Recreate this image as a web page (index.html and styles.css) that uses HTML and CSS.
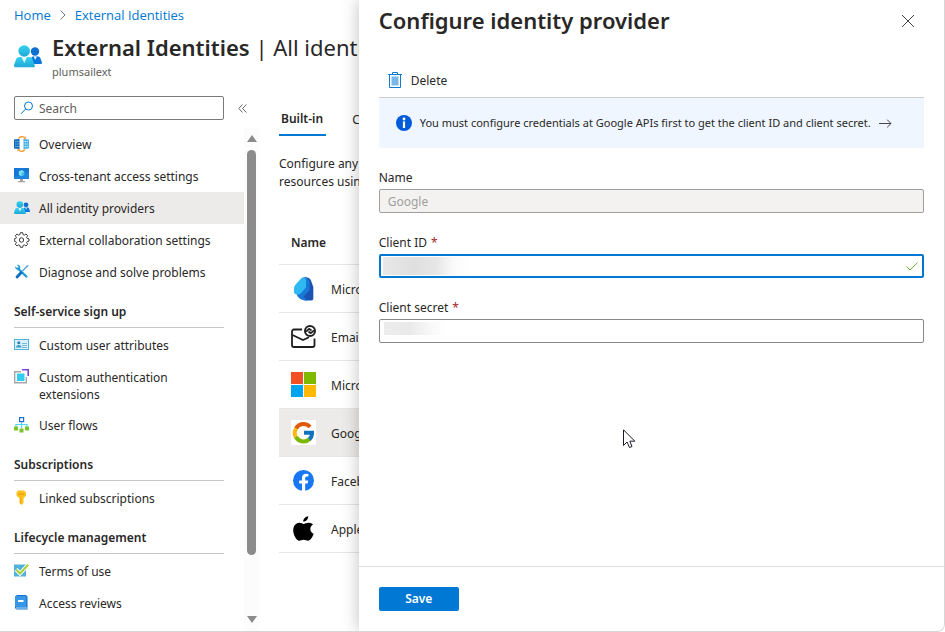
FILE: index.html
```html
<!DOCTYPE html>
<html lang="en">

<head>
    <meta charset="UTF-8">
    <meta name="viewport" content="width=device-width, initial-scale=1.0">
    <title>External Identities - All identity providers</title>
    <link rel="stylesheet" href="styles.css">
</head>

<body>
    <div class="window">
        <nav class="breadcrumb" aria-label="Breadcrumb">
            <a href="#">Home</a>
            <svg width="8" height="12" viewBox="0 0 8 12" fill="none">
                <path d="M1.5 1.5L6 6L1.5 10.5" stroke="#777" stroke-width="1" />
            </svg>
            <a href="#">External Identities</a>
        </nav>

        <header class="page-header">
            <svg class="header-icon" width="28" height="28" viewBox="0 0 28 28">
                <use href="#people" />
            </svg>
            <div>
                <h1 class="page-title">External Identities <span>| All identity providers</span></h1>
                <p class="page-subtitle">plumsailext</p>
            </div>
        </header>

        <div class="columns">
            <aside class="sidebar">
                <div class="search-row">
                    <label class="search-box">
                        <svg width="14" height="14" viewBox="0 0 14 14" fill="none" stroke="#0078d4">
                            <circle cx="8.5" cy="5" r="4" />
                            <path d="M5.7 8L1 12.8" />
                        </svg>
                        <input type="search" placeholder="Search" aria-label="Search">
                    </label>
                    <button class="collapse" aria-label="Collapse menu">
                        <svg width="9" height="9" viewBox="0 0 9 9" fill="none" stroke="#666">
                            <path d="M4.5 0.5L0.8 4.5L4.5 8.5M8.3 0.5L4.6 4.5L8.3 8.5" />
                        </svg>
                    </button>
                </div>

                <div class="menu-area">
                    <div class="menu">
                        <a href="#" class="menu-item">
                            <svg width="16" height="16" viewBox="0 0 16 16">
                                <path d="M0 3.5L5.5 3V13L0 12.5Z" fill="#0f6cbd" />
                                <path d="M9.5 3L15 3.5V12.5L9.5 13Z" fill="#50b4e8" />
                                <path d="M1.3 5.5H2.4M3.3 5.5H4.4M1.3 8H2.4M3.3 8H4.4M1.3 10.5H2.4M3.3 10.5H4.4" stroke="#9bdcfa" stroke-width="1.2" />
                                <path d="M10.7 5.5H11.8M12.7 5.5H13.8M10.7 8H11.8M12.7 8H13.8M10.7 10.5H11.8M12.7 10.5H13.8" stroke="#e3f5fd" stroke-width="1.2" />
                                <path d="M4.5 2.5C6 0.3 9 0.3 10.7 1.6M10.8 13.5C9 15.7 6.5 15.6 4.8 14.3" fill="none" stroke="#f29a2e" stroke-width="1.3" />
                                <path d="M9.2 3.2L11.8 3V0.3ZM6.4 12.7L3.6 13V15.8Z" fill="#f29a2e" />
                            </svg>
                            <span>Overview</span>
                        </a>
                        <a href="#" class="menu-item">
                            <svg width="16" height="16" viewBox="0 0 16 16">
                                <rect x="0" y="0" width="15" height="11" rx="0.5" fill="#1f86e0" />
                                <path d="M0 0H15V4L0 9Z" fill="#0f68c8" opacity="0.5" />
                                <path d="M7.5 2L10.2 3.5V6.7L7.5 8.2L4.8 6.7V3.5Z" fill="#7fe1f7" />
                                <path d="M7.5 5.1L10.2 3.5V6.7L7.5 8.2Z" fill="#44bfe8" />
                                <path d="M6 11H9V13H11V14.3H4V13H6Z" fill="#a3a3a3" />
                            </svg>
                            <span>Cross-tenant access settings</span>
                        </a>
                        <a href="#" class="menu-item selected">
                            <svg width="16" height="16" viewBox="0 0 28 28">
                                <use href="#people" />
                            </svg>
                            <span>All identity providers</span>
                        </a>
                        <a href="#" class="menu-item">
                            <svg width="16" height="16" viewBox="0 0 16 16" fill="none" stroke="#3b3b3b">
                                <path d="M6.3 0.7H8.7L9.1 2.6L10.4 3.1L12 2L13.7 3.7L12.6 5.3L13.1 6.5L15 6.9V9.1L13.1 9.5L12.6 10.7L13.7 12.3L12 14L10.4 12.9L9.1 13.4L8.7 15.3H6.3L5.9 13.4L4.6 12.9L3 14L1.3 12.3L2.4 10.7L1.9 9.5L0.3 9.1V6.9L1.9 6.5L2.4 5.3L1.3 3.7L3 2L4.6 3.1L5.9 2.6Z" />
                                <circle cx="7.5" cy="8" r="2.2" />
                            </svg>
                            <span>External collaboration settings</span>
                        </a>
                        <a href="#" class="menu-item">
                            <svg width="16" height="16" viewBox="0 0 16 16" fill="none">
                                <path d="M4 4.5L12.3 12.5" stroke="#1c9ad6" stroke-width="2.4" stroke-linecap="round" />
                                <path d="M1.2 2.3L3 4L4.4 3.9L4.5 2.5L2.8 0.9C5 0.4 6.8 2.1 6.1 4.3L4.8 5.7C3 6.3 0.7 4.8 1.2 2.3Z" fill="#1c9ad6" />
                                <path d="M13.5 1.8L8.5 7" stroke="#5aa9dc" stroke-width="1.5" />
                                <path d="M12.2 2.5L14.3 0.8L14.7 1.3L13.1 3.4Z" fill="#59a5d6" />
                                <path d="M7 8.7L3 13" stroke="#0f70c0" stroke-width="2.8" stroke-linecap="round" />
                            </svg>
                            <span>Diagnose and solve problems</span>
                        </a>

                        <h2 class="menu-heading">Self-service sign up</h2>
                        <a href="#" class="menu-item">
                            <svg width="16" height="16" viewBox="0 0 16 16">
                                <rect x="0.5" y="2.5" width="14" height="10" fill="#d9f0fb" stroke="#4fb3dd" />
                                <circle cx="4.8" cy="5.8" r="1.5" fill="#2f7fb0" />
                                <path d="M2 10.5C2 7.3 7.5 7.3 7.5 10.5Z" fill="#3d9bcb" />
                                <path d="M8 6.5H13M8 8.5H13M8 10.5H13" stroke="#72bce0" />
                            </svg>
                            <span>Custom user attributes</span>
                        </a>
                        <a href="#" class="menu-item">
                            <svg width="16" height="16" viewBox="0 0 16 16" fill="none">
                                <path d="M7 2.7H0.7V13.8H12.3V8" stroke="#a6a6a6" stroke-width="1.4" />
                                <rect x="3" y="4.5" width="7.5" height="7.5" fill="#32cdf0" />
                                <path d="M8 0.8H14.2V7" stroke="#7b3fe4" stroke-width="1.6" />
                            </svg>
                            <span>Custom authentication<br>extensions</span>
                        </a>
                        <a href="#" class="menu-item">
                            <svg width="16" height="16" viewBox="0 0 16 16" fill="none">
                                <path d="M7.5 5V11M2 10V7.5H13V10" stroke="#50d5f2" stroke-width="1.2" />
                                <rect x="5.6" y="0.6" width="4" height="4" fill="#fff" stroke="#1f6fd0" stroke-width="1.2" />
                                <path d="M0 9.5H4V13.5H0ZM11 9.5H15V13.5H11ZM5.5 11.5H9.5V15.5H5.5Z" fill="#7ac52a" />
                            </svg>
                            <span>User flows</span>
                        </a>

                        <h2 class="menu-heading">Subscriptions</h2>
                        <a href="#" class="menu-item">
                            <svg width="16" height="16" viewBox="0 0 16 16">
                                <path d="M4 0.5H10L12 2.5V5.5L9.5 8.5V13L7.5 15L5.5 13V8.5L2.5 5.5V2.5Z" fill="#fbc21d" />
                                <path d="M4.5 3.5H10V4.7H4.5Z" fill="#e89410" />
                                <path d="M6.7 8V13.8" stroke="#f59d12" />
                            </svg>
                            <span>Linked subscriptions</span>
                        </a>

                        <h2 class="menu-heading">Lifecycle management</h2>
                        <a href="#" class="menu-item">
                            <svg width="16" height="16" viewBox="0 0 16 16" fill="none">
                                <path d="M0 1.5H12V13.5H0Z" fill="#52b2dc" />
                                <path d="M2 6.5L6 10.5L14.2 1.8" stroke="#fff" stroke-width="4" />
                                <path d="M2 6.5L6 10.5L14.2 1.8" stroke="#a9cf38" stroke-width="2" />
                            </svg>
                            <span>Terms of use</span>
                        </a>
                        <a href="#" class="menu-item">
                            <svg width="16" height="16" viewBox="0 0 16 16">
                                <path d="M3 0H12L13.5 1.5V14.5H2.5L1 13V1.5Z" fill="#1173cf" />
                                <path d="M2.5 1H12.3V12H1V2Z" fill="#3896e8" />
                                <path d="M2 13H13" stroke="#cfe8fb" />
                                <rect x="4" y="5" width="5.5" height="2" fill="#fff" />
                            </svg>
                            <span>Access reviews</span>
                        </a>
                    </div>

                    <div class="scrollbar" aria-hidden="true">
                        <span class="arrow-up"></span>
                        <span class="thumb"></span>
                        <span class="arrow-down"></span>
                    </div>
                </div>
            </aside>

            <main class="content">
                <div class="tabs" role="tablist">
                    <button class="tab active" role="tab" aria-selected="true">Built-in</button>
                    <button class="tab" role="tab" aria-selected="false">Custom</button>
                </div>

                <p class="intro">Configure any<br>resources using</p>

                <table class="providers">
                    <thead>
                        <tr>
                            <th colspan="2">Name</th>
                        </tr>
                    </thead>
                    <tbody>
                        <tr>
                            <td class="logo">
                                <svg width="26" height="26" viewBox="0 0 26 26">
                                    <path d="M12 2C15 0.5 18.5 1.5 20 4.5L22.3 11V22.5C22.3 23.8 21.5 24.5 20.3 24.5H14L9 18Z" fill="#1c52b4" />
                                    <path d="M11 2C14 0.5 17.5 2 18.5 5V14.5L12.5 20.5L16 24.5C10 24.5 7 22 5.5 18Z" fill="#1878d6" />
                                    <path d="M3 12.5C3 10.5 4 9 5.5 7.5L10 2.5C12 0.5 15 1.5 15 4.5V11.5L9.5 17.5C8 19 3 19 3 16Z" fill="#30b8f2" />
                                </svg>
                            </td>
                            <td>Microsoft</td>
                        </tr>
                        <tr>
                            <td class="logo">
                                <svg width="26" height="26" viewBox="0 0 26 26" fill="none" stroke="#1f1f1f" stroke-width="1.8">
                                    <path d="M11 5.5H3C1.8 5.5 1 6.3 1 7.5V21C1 22.2 1.8 23 3 23H21.5C22.7 23 23.5 22.2 23.5 21V14.5M1.5 11L12 16L18 13.3" />
                                    <circle cx="19" cy="7" r="5" stroke-width="2" />
                                    <path d="M14.8 7C16 8 16.5 4.8 18.5 5L20.5 6.5M23.2 7C22 6 21.5 9 19.5 9L17.5 7.5" stroke-width="1.8" />
                                </svg>
                            </td>
                            <td>Email</td>
                        </tr>
                        <tr>
                            <td class="logo">
                                <svg width="26" height="26" viewBox="0 0 26 26">
                                    <path d="M0 0H12V12H0Z" fill="#f25022" />
                                    <path d="M13 0H25V12H13Z" fill="#7fba00" />
                                    <path d="M0 13H12V25H0Z" fill="#00a4ef" />
                                    <path d="M13 13H25V25H13Z" fill="#ffb900" />
                                </svg>
                            </td>
                            <td>Microsoft</td>
                        </tr>
                        <tr class="selected">
                            <td class="logo">
                                <svg width="26" height="26" viewBox="0 0 26 26" fill="none" stroke-width="4">
                                    <rect width="25" height="25" fill="#fff" />
                                    <path d="M5 8.5A8.5 8.5 0 0 1 19 7" stroke="#df5a0b" />
                                    <path d="M5 17.5A9 9 0 0 1 5 8.5" stroke="#fbb813" />
                                    <path d="M18.5 19A8.5 8.5 0 0 1 5 17" stroke="#7bb800" />
                                    <path d="M13 12.8H21C21 16 20.3 17.8 18.3 19.3" stroke="#0f72bd" />
                                </svg>
                            </td>
                            <td>Google</td>
                        </tr>
                        <tr>
                            <td class="logo">
                                <svg width="26" height="26" viewBox="0 0 26 26">
                                    <circle cx="12.5" cy="12.5" r="10.5" fill="#1877f2" />
                                    <path d="M11 23V15.5H8.2V12.5H11V10C11 7.2 12.6 5.7 15.2 5.7L17.4 5.9V8.5H16C14.6 8.5 14.2 9.3 14.2 10.2V12.5H17.2L16.7 15.5H14.2V23Z" fill="#fff" />
                                </svg>
                            </td>
                            <td>Facebook</td>
                        </tr>
                        <tr>
                            <td class="logo">
                                <svg width="26" height="26" viewBox="0 0 26 26">
                                    <path d="M17.2 0.2C17.4 3 15 5.6 12.2 5.6C12 3 14.5 0.5 17.2 0.2ZM22 8.5C18 11 18.8 16 22.6 17.7C21.8 20.5 19.5 24.6 17 24.8C15.4 24.8 14.8 23.8 12.7 23.8C10.6 23.8 9.9 24.8 8.4 24.8C5.5 24.6 2.3 19 2.2 14.5C2.2 9.5 5.3 6.9 8.3 6.8C10.2 6.8 11.5 7.9 12.7 7.9C13.8 7.9 15.5 6.6 17.8 6.7C19.5 6.8 21 7.3 22 8.5Z" fill="#000" />
                                </svg>
                            </td>
                            <td>Apple</td>
                        </tr>
                    </tbody>
                </table>
            </main>
        </div>

        <section class="panel" aria-labelledby="panel-title">
            <header class="panel-header">
                <h2 id="panel-title">Configure identity provider</h2>
                <button class="close" aria-label="Close">
                    <svg width="14" height="14" viewBox="0 0 14 14" fill="none" stroke="#444">
                        <path d="M1 1L13 13M13 1L1 13" />
                    </svg>
                </button>
            </header>

            <div class="toolbar">
                <button class="delete">
                    <svg width="14" height="18" viewBox="0 0 14 18" fill="none" stroke="#0f7bd0">
                        <path d="M0 2.5H14M4.5 2.5V0.5H9.5V2.5M1.5 2.5V15.5H12.5V2.5" />
                        <rect x="4" y="5" width="6" height="8" fill="#78b7e6" stroke="#78b7e6" />
                    </svg>
                    <span>Delete</span>
                </button>
            </div>

            <a href="#" class="info">
                <svg width="16" height="16" viewBox="0 0 16 16">
                    <circle cx="8" cy="8" r="8" fill="#015cda" />
                    <circle cx="8" cy="4" r="1.4" fill="#fff" />
                    <path d="M6.9 6.4H9.1V13H6.9Z" fill="#fff" />
                </svg>
                <span>You must configure credentials at Google APIs first to get the client ID and client secret.</span>
                <svg width="13" height="9" viewBox="0 0 13 9" fill="none" stroke="#444">
                    <path d="M0 4.5H12M8.2 0.7L12 4.5L8.2 8.3" />
                </svg>
            </a>

            <form class="form">
                <div class="field">
                    <label for="provider-name">Name</label>
                    <input type="text" id="provider-name" value="Google" disabled>
                </div>
                <div class="field">
                    <label for="client-id">Client ID <span class="required">*</span></label>
                    <div class="input-wrap">
                        <input type="text" id="client-id" class="focused masked-id" required>
                        <svg class="valid" width="12" height="9" viewBox="0 0 12 9" fill="none" stroke="#6bb12d">
                            <path d="M0.5 4.5L4 8L11.5 0.7" />
                        </svg>
                    </div>
                </div>
                <div class="field">
                    <label for="client-secret">Client secret <span class="required">*</span></label>
                    <input type="text" id="client-secret" class="masked-secret" required>
                </div>
            </form>

            <footer class="panel-footer">
                <button class="save">Save</button>
            </footer>
        </section>

        <svg class="cursor" width="13" height="20" viewBox="0 0 13 20">
            <path d="M0.5 0.8V16.5L4 13L6.5 18.5L9 17.5L6.8 12.2H11.8Z" fill="#fff" stroke="#1b1b2b" />
        </svg>
    </div>

    <!-- shared people icon -->
    <svg class="defs" width="0" height="0" aria-hidden="true">
        <defs>
            <linearGradient id="people-fill" x1="0" y1="0" x2="0" y2="1">
                <stop offset="0" stop-color="#35d2f0" />
                <stop offset="1" stop-color="#1fa8d8" />
            </linearGradient>
            <symbol id="people" viewBox="0 0 28 28">
                <circle cx="21" cy="8.5" r="4.2" fill="#0f6fd2" />
                <path d="M16 19L17 15.5C17.5 14 18.5 13.3 20 13.3H23C25 13.3 26 14 26.5 15.5L28 19.5C28.1 20.5 27.7 21 27 21H17Z" fill="#0a78dc" />
                <path d="M19.5 13.3H23L21.2 17Z" fill="#dff2fb" />
                <circle cx="10.2" cy="8" r="5.8" fill="url(#people-fill)" />
                <path d="M0 22L2 16.5C2.5 14.8 4 14 6 14H14.5C16.5 14 18 14.8 18.5 16.5L20.8 22.5C21 23.7 20.5 24.3 19.5 24.3H1.5C0.5 24.3 -0.2 23.5 0 22Z" fill="url(#people-fill)" />
                <path d="M7.5 14H13L10.3 20Z" fill="#e8f9fd" />
            </symbol>
        </defs>
    </svg>
</body>

</html>
```

FILE: styles.css
```css
/* Reset and base styles */
* {
    margin: 0;
    padding: 0;
    box-sizing: border-box;
}

body {
    background-color: #fff;
    color: #292827;
    font-family: 'Noto Sans', 'Open Sans', sans-serif;
    font-size: 12px;
    line-height: 18px;
}

button,
input {
    font: inherit;
    color: inherit;
    background: none;
    border: none;
}

button {
    cursor: pointer;
}

a {
    color: inherit;
    text-decoration: none;
}

svg {
    flex-shrink: 0;
}

.defs {
    position: absolute;
}

.window {
    position: relative;
    display: flex;
    flex-direction: column;
    height: 100vh;
    overflow: hidden;
    border-right: 1px solid #d6d6d6;
    border-bottom: 1px solid #d6d6d6;
    border-bottom-right-radius: 8px;
}

/* Page header */
.breadcrumb {
    display: flex;
    align-items: center;
    gap: 8px;
    padding: 6px 14px 0;
    color: #0078d4;
    font-family: 'Open Sans', sans-serif;
    font-size: 13px;
}

.breadcrumb a {
    color: #0078d4;
}

.page-header {
    display: flex;
    align-items: center;
    gap: 10px;
    height: 66px;
    padding: 0 14px;
    white-space: nowrap;
}

.page-title {
    font-size: 22px;
    font-weight: 600;
    line-height: 30px;
}

.page-title span {
    font-weight: 400;
}

.page-subtitle {
    font-size: 11px;
    line-height: 20px;
    color: #605e5c;
}

.columns {
    display: flex;
    flex: 1;
    min-height: 0;
}

/* Sidebar */
.sidebar {
    display: flex;
    flex-direction: column;
    flex: 0 0 259px;
    padding-top: 6px;
}

.search-row {
    display: flex;
    align-items: center;
    gap: 14px;
    padding-left: 14px;
}

.search-box {
    display: flex;
    align-items: center;
    gap: 5px;
    width: 210px;
    height: 24px;
    padding: 0 5px;
    border: 1px solid #7a7978;
    border-radius: 2px;
}

.search-box input {
    width: 100%;
    padding-top: 2px;
    outline: none;
}

.search-box input::placeholder {
    color: #605e5c;
    opacity: 1;
}

.collapse {
    display: flex;
}

.menu-area {
    display: flex;
    flex: 1;
    min-height: 0;
    margin-top: 8px;
}

.menu {
    flex: 1;
    overflow: hidden;
}

.menu-item {
    display: flex;
    align-items: flex-start;
    gap: 9px;
    min-height: 32px;
    padding: 8px 14px 6px;
    line-height: 17px;
}

.menu-item.selected {
    background-color: #edebe9;
}

.menu-heading {
    margin: 15px 20px 1px 14px;
    padding-bottom: 6px;
    border-bottom: 1px solid #c8c6c4;
    font-size: 12px;
    font-weight: 600;
    line-height: 18px;
}

.scrollbar {
    display: flex;
    flex-direction: column;
    align-items: center;
    gap: 8px;
    width: 15px;
    padding: 7px 0 8px;
    background-color: #fcfcfc;
}

.arrow-up,
.arrow-down {
    border: 5px solid transparent;
}

.arrow-up {
    border-top: none;
    border-bottom: 7px solid #8b8b8b;
}

.arrow-down {
    border-bottom: none;
    border-top: 7px solid #8b8b8b;
}

.thumb {
    width: 9px;
    height: 83%;
    margin-bottom: auto;
    border-radius: 5px;
    background-color: #8b8b8b;
}

/* Provider list */
.content {
    flex: 1;
    min-width: 0;
    padding: 17px 20px 0;
}

.tabs {
    display: flex;
    gap: 24px;
}

.tab {
    height: 29px;
    padding: 2px 3px 6px 2px;
}

.tab.active {
    font-weight: 600;
    border-bottom: 2px solid #0078d4;
}

.intro {
    margin-top: 19px;
}

.providers {
    width: 100%;
    margin-top: 30px;
    border-collapse: collapse;
}

.providers th {
    height: 43px;
    padding: 2px 12px 0;
    text-align: left;
    font-weight: 600;
}

.providers td {
    height: 48px;
    padding-top: 3px;
}

.providers tr {
    border-bottom: 1px solid #e6e6e6;
}

.providers .logo {
    width: 52px;
    padding: 2px 0 0 12px;
}

.providers .logo svg {
    display: block;
}

.providers .selected {
    background-color: #edebe9;
}

/* Context panel, slides over the page */
.panel {
    position: absolute;
    top: 0;
    right: 0;
    bottom: 0;
    display: flex;
    flex-direction: column;
    width: 62%;
    background-color: #fff;
    box-shadow: 0 0 16px rgba(0, 0, 0, 0.25);
}

.panel-header {
    display: flex;
    align-items: center;
    justify-content: space-between;
    height: 42px;
    padding: 0 29px 0 20px;
}

.panel-header h2 {
    padding-bottom: 2px;
    font-size: 22px;
    font-weight: 600;
    line-height: 30px;
}

.close {
    display: flex;
}

.toolbar {
    margin: 20px 20px 0;
    padding: 0 9px;
    border-bottom: 1px solid #d2d0ce;
}

.delete {
    display: flex;
    align-items: center;
    gap: 9px;
    height: 35px;
    padding-top: 2px;
}

.info {
    display: flex;
    align-items: center;
    gap: 8px;
    margin: 0 20px;
    padding: 16px 17px;
    border-radius: 0 0 2px 2px;
    background-color: #eff6ff;
    font-size: 11px;
}

.form {
    display: flex;
    flex-direction: column;
    gap: 21px;
    flex: 1;
    padding: 21px 20px 0;
}

.field label {
    display: block;
    margin-bottom: 2px;
}

.field input {
    display: block;
    width: 100%;
    height: 24px;
    padding: 0 8px;
    border: 1px solid #8a8886;
    border-radius: 2px;
    outline: none;
}

.field input:disabled {
    border-color: #a19f9d;
    background-color: #f3f2f1;
    color: #a19f9d;
}

.field input.focused {
    border: 2px solid #0078d4;
}

.required {
    margin-left: 1px;
    color: #a4262c;
}

.input-wrap {
    position: relative;
}

.valid {
    position: absolute;
    right: 6px;
    top: 8px;
}

/* redacted values */
.masked-id {
    background: linear-gradient(to right, #e8e8e8, #dfdfdf 35%, #e6e6e6 60%, #fafafa 80%, #fff) 2px 1px / 88px 18px no-repeat;
}

.masked-secret {
    background: linear-gradient(to right, #ececec, #e9e9e9 40%, #f8f8f8 75%, #fff) 4px 2px / 62px 13px no-repeat;
}

.panel-footer {
    padding: 20px;
    border-top: 1px solid #e1dfdd;
}

.save {
    width: 80px;
    height: 24px;
    border-radius: 2px;
    background-color: #0078d4;
    color: #fff;
    font-weight: 600;
}

.cursor {
    position: absolute;
    left: 623px;
    top: 429px;
}
```
